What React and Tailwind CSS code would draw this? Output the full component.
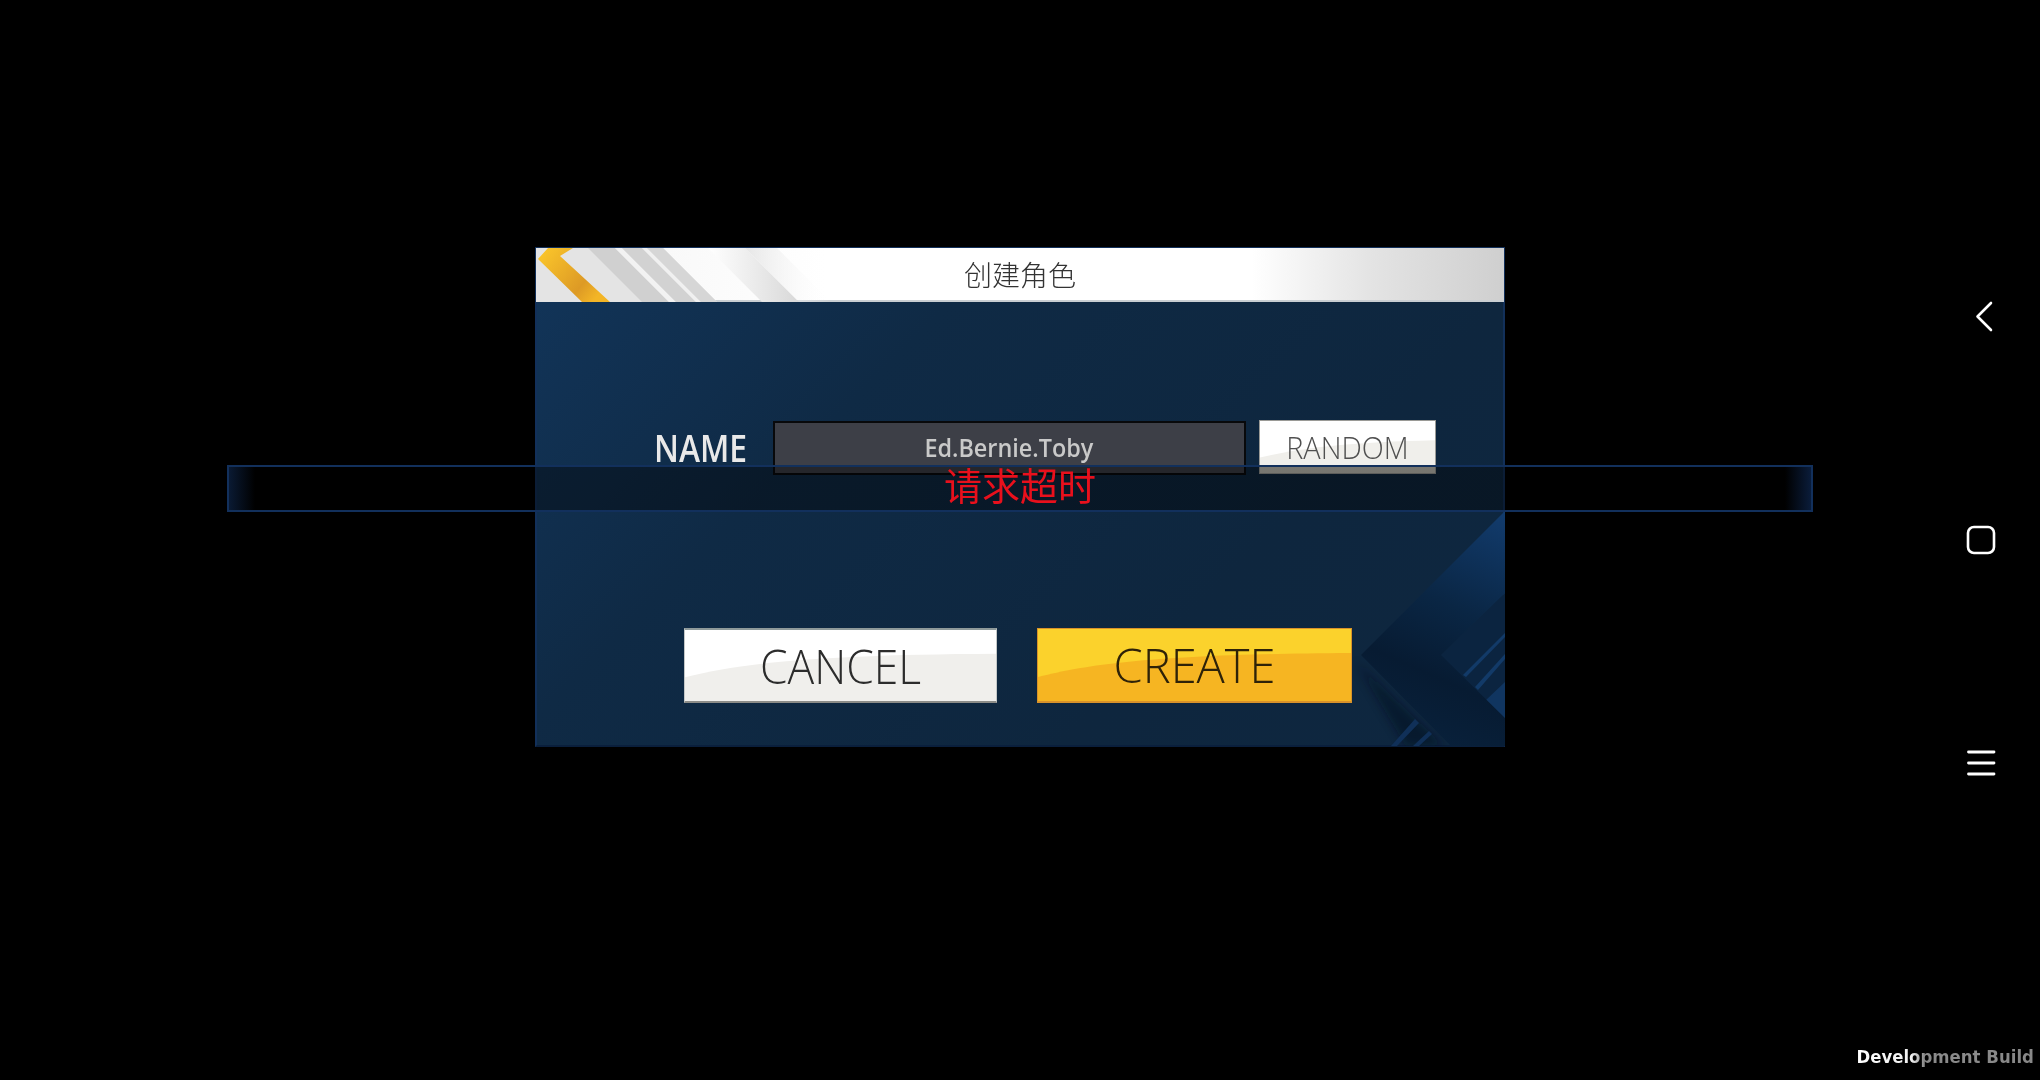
const openSans = "font-['Open_Sans',sans-serif]";
const cjk = "font-['Noto_Sans_CJK_SC',sans-serif]";

function HeaderArt() {
  return (
    <svg className="absolute inset-0" width="970" height="54" viewBox="-1 0 970 54" aria-hidden="true">
      <defs>
        <linearGradient id="hy" x1="0" y1="0" x2="1" y2="0.6">
          <stop offset="0" stopColor="#fdc92b" />
          <stop offset="0.75" stopColor="#dd9a25" />
          <stop offset="1" stopColor="#f3b526" />
        </linearGradient>
        <linearGradient id="hf" x1="0" y1="0" x2="1" y2="0">
          <stop offset="0" stopColor="#ffffff" />
          <stop offset="1" stopColor="#d8d8d8" />
        </linearGradient>
        <linearGradient id="hs" x1="0" y1="0" x2="1" y2="0">
          <stop offset="0" stopColor="#e6e6e6" />
          <stop offset="1" stopColor="#ffffff" stopOpacity="0" />
        </linearGradient>
      </defs>
      <polygon points="-1,0 126,0 180,54 -1,54" fill="#e4e4e4" />
      <polygon points="51,0 78,0 132,54 105,54" fill="#d0d0d0" />
      <polygon points="78,0 85,0 139,54 132,54" fill="#f2f2f2" />
      <polygon points="85,0 105,0 159,54 139,54" fill="#d2d2d2" />
      <polygon points="105,0 110,0 164,54 159,54" fill="#f0f0f0" />
      <polygon points="110,0 126,0 180,54 164,54" fill="#d6d6d6" />
      <polygon points="171,0 208,0 262,54 225,54" fill="url(#hf)" />
      <polygon points="208,0 240,0 294,54 262,54" fill="url(#hs)" />
      <polygon points="11,0 36,0 23,8 73,54 45,54 1,11" fill="url(#hy)" />
    </svg>
  );
}

function CornerArt() {
  return (
    <svg className="absolute inset-0" width="968" height="498" viewBox="536 248 968 498" aria-hidden="true">
      <defs>
        <linearGradient id="cu" gradientUnits="userSpaceOnUse" x1="1504" y1="511" x2="1400" y2="746">
          <stop offset="0" stopColor="#123c6e" />
          <stop offset="0.42" stopColor="#0a2644" />
          <stop offset="0.7" stopColor="#071b32" />
          <stop offset="1" stopColor="#09223d" />
        </linearGradient>
        <filter id="cb"><feGaussianBlur stdDeviation="5" /></filter>
      </defs>
      <polygon points="1355,662 1443,746 1405,746" fill="#03101f" opacity="0.5" filter="url(#cb)" />
      <polygon points="1440,655 1504,593 1504,746 1470,690" fill="#0b2440" />
      <polygon points="1462,675 1504,633 1504,637 1465,677" fill="#123a68" />
      <polygon points="1474,687 1504,654 1504,659 1477,690" fill="#123a68" />
      <polygon points="1485,700 1504,682 1504,746" fill="#103560" />
      <polygon points="1390,746 1414,719 1418,723 1396,746" fill="#103058" />
      <polygon points="1412,746 1428,731 1431,734 1418,746" fill="#103058" />
      <polygon points="1360,655 1504,511 1504,593 1440,655 1504,718 1504,746 1450,746" fill="url(#cu)" />
    </svg>
  );
}

function Swoosh({ w, h, d, fill }) {
  return (
    <svg className="absolute inset-0 h-full w-full" viewBox={`0 0 ${w} ${h}`} preserveAspectRatio="none" aria-hidden="true">
      <path d={d} fill={fill} />
    </svg>
  );
}

function GameButton({ label, yellow }) {
  return (
    <button
      className={
        yellow
          ? "relative h-[75px] w-[315px] overflow-hidden border border-b-2 border-[#d9922a] bg-[#fbd22c]"
          : "relative h-[75px] w-[313px] overflow-hidden border border-t-2 border-b-2 border-x-[#c4c8c8] border-t-[#8f9a9a] border-b-[#8c8c88] bg-white"
      }
    >
      <Swoosh w={315} h={75} d="M0 50 C60 34 140 26 315 25 L315 75 L0 75 Z" fill={yellow ? "#f6b522" : "#f0efec"} />
      <span
        className={
          yellow
            ? `relative block scale-x-[1.0] text-[47px] leading-[72px] font-light text-[#2e2208] ${openSans}`
            : `relative block scale-x-[0.945] text-[47px] leading-[72px] font-light text-[#2c2c2c] ${openSans}`
        }
      >
        {label}
      </span>
    </button>
  );
}

export default function App() {
  return (
    <div className="relative flex h-[1080px] w-[2040px] overflow-hidden bg-black">
      <main className="flex-1 pt-[247px] pl-[535px]">
        <section className="relative h-[500px] w-[970px] border-x-2 border-t border-b-2 border-x-[#12305a] border-t-[#12305a] border-b-[#0a1f3c] bg-[linear-gradient(135deg,#12355a_0%,#0f2a45_32%,#0e263e_70%,#0e2740_100%)] blur-[0.5px]">
          <CornerArt />
          <header className="relative -mx-[1px] flex h-[54px] items-center justify-center border-b-2 border-[#c9ced2] bg-[linear-gradient(90deg,#f4f4f4_0%,#ffffff_30%,#ffffff_74%,#e4e4e4_86%,#cfcfcf_100%)]">
            <HeaderArt />
            <h1 className={`relative text-[28px] font-light text-[#333333] ${cjk}`}>创建角色</h1>
          </header>

          <div className="relative flex items-center pt-[119px] pl-[117px]">
            <span className={`w-[119px] origin-left scale-x-[0.86] text-[37px] leading-[54px] font-semibold text-[#e9e9e9] ${openSans}`}>
              NAME
            </span>
            <div className={`flex h-[54px] w-[473px] items-center justify-center border-2 border-[#08090b] bg-[#3d3f47] text-[26px] font-semibold text-[#c9c9c9] ${openSans}`}>
              <span className="block -translate-x-px -translate-y-px scale-x-[0.9]">Ed.Bernie.Toby</span>
            </div>
            <button className="relative ml-[13px] h-[54px] w-[177px] -translate-y-px overflow-hidden border border-[#9a9a96] bg-white">
              <Swoosh w={177} h={54} d="M0 38 C40 28 90 22 177 20 L177 46 L0 46 Z" fill="#f0efeb" />
              <div className="absolute inset-x-0 bottom-0 h-[8px] bg-[#c7c5ba]" />
              <span className={`relative block scale-x-[0.93] text-[31px] leading-[52px] font-light text-[#505050] ${openSans}`}>RANDOM</span>
            </button>
          </div>

          <div className="relative flex gap-[40px] pt-[153px] pl-[147px]">
            <GameButton label="CANCEL" />
            <GameButton label="CREATE" yellow />
          </div>
        </section>
      </main>

      <div className="absolute top-[465px] left-[227px] flex h-[47px] w-[1586px] items-center justify-center border-2 border-[#12305c] bg-[linear-gradient(90deg,#0a1a33_0px,rgba(0,0,0,0.4)_26px,rgba(0,0,0,0.4)_calc(100%-26px),#0a1c3a_100%)] pb-[10px]">
        <span className={`text-[38px] leading-[46px] font-normal text-[#e8101c] blur-[0.4px] ${cjk}`}>请求超时</span>
      </div>

      <nav className="flex w-[100px] flex-col items-start pt-[300px]" aria-label="system navigation">
        <svg className="ml-[33px]" width="24" height="32" viewBox="0 0 24 32" fill="none" stroke="white" strokeWidth="2.6" strokeLinecap="round" strokeLinejoin="round">
          <path d="M18 3 L4.5 16.5 L18 30" />
        </svg>
        <svg className="mt-[192px] ml-[25px]" width="32" height="32" viewBox="0 0 32 32" fill="none" stroke="white" strokeWidth="2.6">
          <rect x="3" y="3" width="26" height="26" rx="6" />
        </svg>
        <svg className="mt-[192px] ml-[25px]" width="32" height="30" viewBox="0 0 32 30" fill="none" stroke="white" strokeWidth="2.8" strokeLinecap="round">
          <path d="M3.5 4 H29 M3.5 15 H29 M3.5 26 H29" />
        </svg>
      </nav>

      <footer className="absolute right-[6px] bottom-[11px] origin-right scale-x-[0.92] bg-[linear-gradient(90deg,#ffffff_0%,#f0f0f0_31%,#8a8a8a_38%,#888888_100%)] bg-clip-text font-['DejaVu_Sans',sans-serif] text-[18px] leading-[24px] font-bold text-transparent">
        Development Build
      </footer>
    </div>
  );
}
